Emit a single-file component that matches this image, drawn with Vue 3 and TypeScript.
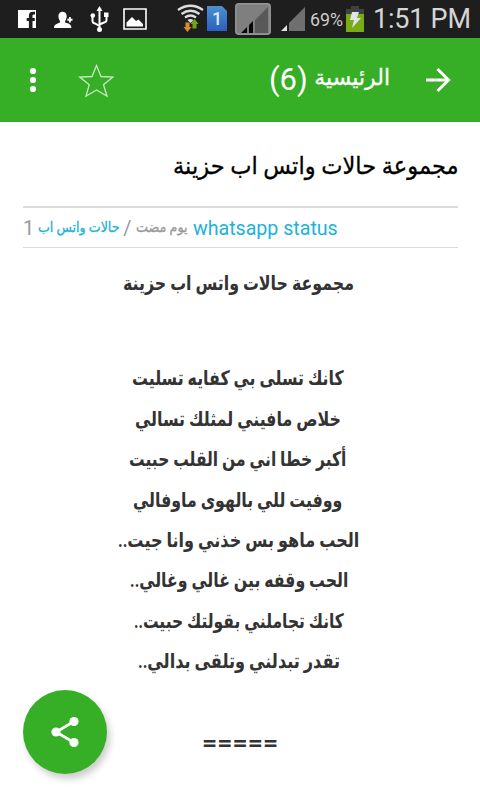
<script setup lang="ts">
interface Line { text: string; width: number; shift: number; top: number }

const lines: Line[] = [
  { text: 'مجموعة حالات واتس اب حزينة', width: 231, shift: -1, top: 0 },
  { text: 'كانك تسلى بي كفايه تسليت', width: 212, shift: -2, top: 55 },
  { text: 'خلاص مافيني لمثلك تسالي', width: 206, shift: -2, top: 0 },
  { text: 'أكبر خطا اني من القلب حبيت', width: 217, shift: -2, top: 0 },
  { text: 'ووفيت للي بالهوى ماوفالي', width: 209, shift: -2, top: 0 },
  { text: 'الحب ماهو بس خذني وانا جيت..', width: 241, shift: -1, top: 0 },
  { text: 'الحب وقفه بين غالي وغالي..', width: 218, shift: -1, top: 0 },
  { text: 'كانك تجاملني بقولتك حبيت..', width: 210, shift: -1, top: 0 },
  { text: 'تقدر تبدلني وتلقى بدالي..', width: 202, shift: -1, top: 0 },
]

// Condenses a text run horizontally to the width of its parent.
const vFit = {
  mounted(el: HTMLElement) {
    const room = el.parentElement!.clientWidth
    el.style.transform = `scaleX(${room / el.offsetWidth})`
  },
}
</script>

<template>
  <div class="screen">
    <header class="status">
      <svg class="glyphs" width="480" height="38" viewBox="0 0 480 38">
        <path fill="#fff" d="M18 10h18v18h-3.500v-7h2.300v-3h-2.300v-2c0-1 .4-1.500 1.500-1.500h1v-2.700h-2.200c-2.600 0-3.900 1.500-3.900 4v2.200h-2.200v3h2.200v7H18z" />
        <path fill="#fff" d="M54 28c0-3 1.500-3.800 6-5.500v-1.500c-1-1.300-1.600-3-1.600-5 0-2.700 1.800-4.300 4-4.300s4.300 1.300 4.300 4.300c0 2.300-.6 3.700-1.600 5v1.500c4.200 1.200 6.300 2 6.300 5.500zM69 17h1.800v1.800h1.700v2h-1.700v1.800H69v-1.800h-1.700v-2H69z" />
        <g stroke="#fff" stroke-width="2" fill="none"><path d="M99.500 9v20M92.500 17v4q0 2 2.500 2.500l4.500 2.500M106.500 16v4q0 2-2.500 2.500l-4.500 2" /></g>
        <g fill="#fff"><path d="M99.500 6l3 5h-6zM104 12.500h4.500v4.500H104z" /><circle cx="92.800" cy="15.500" r="2.300" /><circle cx="99.500" cy="29.500" r="2.500" /></g>
        <path fill="none" stroke="#fff" stroke-width="1.600" d="M124 9h22v20h-22z" />
        <path fill="#fff" d="M126.500 26.500v-4l5.500-5.500 4 4 2.500-1.500 4.500 4.500v2.500z" />
        <g fill="none" stroke="#ddd" stroke-width="2.300"><path d="M178 10q12.500-8.500 25 0M181.500 14q9-6.500 18 0M185 17.500q5.500-4 11 0" /></g>
        <path fill="#ddd" d="M187.500 20q3-2 6 0l-3 3z" />
        <path fill="#d98b35" d="M185.500 22.500h4v4.500h2l-4 5-4-5h2z" />
        <path fill="#72a51a" d="M192.500 28.500h4v-4.500h2l-4-5-4 5h2z" />
        <path fill="url(#sim)" d="M207 6h15l5 5v20h-20z" />
        <rect x="235.800" y="3.800" width="34.400" height="30.400" rx="3" fill="#7f7f7f" stroke="#959595" stroke-width="1.500" />
        <path fill="#595959" d="M268 7v26h-13V20z" /><path fill="#080808" d="M253 21v12h-4v-8zM247 27v6h-6z" />
        <path fill="#6f6f6f" d="M305 7v24h-16V23z" /><path fill="#e2e2e2" d="M287 25v6h-6z" />
        <path fill="#414141" d="M351 6h8v3h5v5h-18V9h5z" /><path fill="#77ab18" d="M346 14h18v18h-18z" />
        <path fill="#e4e4e4" d="M352 12h7l-2 6h4l-9 10 2-8h-4z" />
        <defs><linearGradient id="sim" x2="0" y2="1"><stop stop-color="#4b91cf" /><stop offset="1" stop-color="#2b5fbd" /></linearGradient></defs>
        <text x="212" y="25" font-size="18" font-weight="500" fill="#dceaff">1</text>
        <text x="310" y="26" font-size="18" fill="#ccc" textLength="33" lengthAdjust="spacingAndGlyphs">69%</text>
        <text x="373" y="28" font-size="27" fill="#d5d5d5" textLength="98">1:51 PM</text>
      </svg>
    </header>

    <nav class="bar">
      <svg class="more" width="8" height="26" viewBox="0 0 8 26" fill="#fff"><circle cx="4" cy="4" r="3.100" /><circle cx="4" cy="13" r="3.100" /><circle cx="4" cy="22" r="3.100" /></svg>
      <svg class="star" width="36" height="36" viewBox="0 0 36 36"><path fill="none" stroke="#c9eac4" stroke-width="1.300" d="M18.500 3.500l4.500 11 12 .5-9.500 7.700 3.500 11.500L18.500 28 8 34.200l3.200-11.500L1.800 15l12.200-.5z" /></svg>
      <span class="count">(6)</span>
      <span class="home"><span v-fit class="run">الرئيسية</span></span>
      <svg class="arrow" width="28" height="28" viewBox="0 0 28 28"><path fill="none" stroke="#fff" stroke-width="3" d="M2 14h22M13.500 3l11 11-11 11" /></svg>
    </nav>

    <main class="page">
      <h1 class="title"><span v-fit class="run">مجموعة حالات واتس اب حزينة</span></h1>
      <div class="meta">
        <span class="num">1</span>
        <span class="cat"><span v-fit class="run">حالات واتس اب</span></span>
        <span class="slash">/</span>
        <span class="ago"><span v-fit class="run">يوم مضت</span></span>
        <span class="author"><span v-fit class="run latin">whatsapp status</span></span>
      </div>
      <article class="poem">
        <p v-for="(line, i) in lines" :key="i" class="line" :style="{ width: line.width + 'px', marginTop: line.top + 'px', translate: line.shift + 'px' }"><span v-fit class="run">{{ line.text }}</span></p>
        <p class="line rule"><span v-fit class="run">=====</span></p>
      </article>
    </main>

    <button class="share" aria-label="Share">
      <svg width="30" height="32" viewBox="0 0 30 32"><path fill="none" stroke="#fff" stroke-width="2.700" d="M24 5.500L6 16l18 10.500" /><g fill="#fff"><circle cx="24" cy="5.500" r="4.600" /><circle cx="6" cy="16" r="4.600" /><circle cx="24" cy="26.500" r="4.600" /></g></svg>
    </button>
  </div>
</template>

<style>
body { margin: 0; background: #fff; overflow: hidden; }
</style>

<style scoped>
.screen { width: 480px; height: 800px; overflow: hidden; background: #fff; font-family: Roboto, "DejaVu Sans", sans-serif; position: relative; }
.status { height: 38px; background: #1e1e1e; }
.glyphs { display: block; }
.bar { height: 84px; background: #36ae25; display: flex; align-items: center; box-sizing: border-box; padding: 0 28px 0 29px; color: #fff; }
.more { flex: none; }
.star { margin-left: 41px; flex: none; }
.count { margin-left: auto; width: 37px; margin-right: 8px; font-size: 31px; line-height: 40px; white-space: nowrap; }
.home { width: 76px; direction: rtl; font-size: 22px; line-height: 40px; margin-right: 34px; padding-bottom: 4px; -webkit-text-stroke: .3px #fff; }
.arrow { flex: none; }
.run { display: inline-block; white-space: nowrap; transform-origin: right center; }
.latin { transform-origin: left center; }
.page { padding: 0 21px 0 23px; }
.title { width: 286px; margin: 24px 0 0 auto; height: 60px; line-height: 40px; font-size: 24px; font-weight: 400; color: #000; direction: rtl; -webkit-text-stroke: .3px #000; }
.meta { height: 39px; margin-right: 1px; border-top: 2px solid #dcdcdc; border-bottom: 1px solid #dcdcdc; display: flex; align-items: center; line-height: 38px; font-size: 20px; color: #999; }
.num { width: 14px; }
.cat { width: 82px; direction: rtl; font-size: 14px; color: #20b2d8; padding-bottom: 2px; -webkit-text-stroke: .3px #20b2d8; }
.slash { width: 17px; text-align: center; }
.ago { width: 52px; direction: rtl; font-size: 14px; padding-bottom: 2px; -webkit-text-stroke: .3px #999; }
.author { width: 145px; margin-left: 5px; color: #20b2d8; }
.poem { padding-top: 15px; margin-right: 2px; direction: rtl; font-size: 20px; font-weight: 700; color: #333; }
.line { margin: 0 auto; height: 40.4px; line-height: 40.4px; }
.rule { width: 76px; margin-top: 41px; font-size: 22px; }
.share { position: absolute; left: 23px; top: 690px; width: 84px; height: 84px; padding: 0; border: 0; border-radius: 50%; background: #36ae25; display: flex; align-items: center; justify-content: center; box-shadow: 3px 5px 7px rgba(0, 0, 0, .2); }
</style>
